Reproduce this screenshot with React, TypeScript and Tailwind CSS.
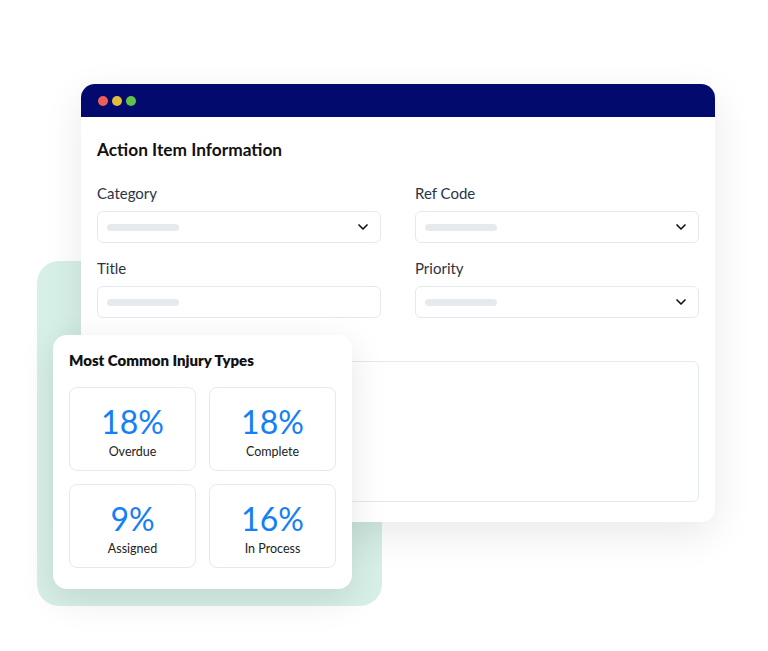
import { ChevronDown } from "lucide-react";

const stats = [
  { value: "18%", label: "Overdue" },
  { value: "18%", label: "Complete" },
  { value: "9%", label: "Assigned" },
  { value: "16%", label: "In Process" },
];

function Field({ label, select }: { label: string; select?: boolean }) {
  return (
    <div className="flex flex-col">
      <span className="text-[15px] leading-5 text-[#2b3445]">{label}</span>
      <div className="mt-2 flex h-8 items-center justify-between rounded-md border border-[#e4e9f0] bg-white pl-[9px] pr-[9px]">
        <div className="h-[7px] w-[72px] rounded-full bg-[#e6eaef]" />
        {select && <ChevronDown className="h-4 w-4 text-[#111]" strokeWidth={2.5} />}
      </div>
    </div>
  );
}

export default function App() {
  return (
    <div
      className="relative h-[651px] w-[768px] overflow-hidden bg-white"
      style={{ fontFamily: "Lato, 'Open Sans', sans-serif" }}
    >
      {/* mint backdrop */}
      <div className="absolute left-[37px] top-[261px] h-[345px] w-[345px] rounded-[22px] bg-[#d6efe7]" />

      {/* form window */}
      <div className="absolute left-[81px] top-[84px] flex h-[438px] w-[634px] flex-col overflow-hidden rounded-[14px] bg-white shadow-[0_12px_40px_rgba(0,0,0,0.09)]">
        <div className="flex h-[33px] items-center gap-1 bg-[#020a6e] pl-[17px] pr-4">
          <span className="h-[10px] w-[10px] rounded-full bg-[#ec5f57]" />
          <span className="h-[10px] w-[10px] rounded-full bg-[#e2bd3d]" />
          <span className="h-[10px] w-[10px] rounded-full bg-[#61c149]" />
        </div>
        <div className="flex flex-1 flex-col px-4 pb-5 pt-[21px]">
          <h2 className="text-[17.3px] font-bold leading-6 text-[#111]">Action Item Information</h2>
          <div className="mt-[21px] grid grid-cols-2 gap-x-[34px] gap-y-[15px]">
            <Field label="Category" select />
            <Field label="Ref Code" select />
            <Field label="Title" />
            <Field label="Priority" select />
          </div>
          <span className="mt-[15px] text-[15px] leading-5 text-[#2b3445]">Description</span>
          <div className="mt-2 flex-1 rounded-md border border-[#e4e9f0]" />
        </div>
      </div>

      {/* stats card */}
      <div className="absolute left-[53px] top-[335px] w-[299px] rounded-[14px] bg-white px-4 pb-[21px] pt-[15px] shadow-[0_10px_36px_rgba(0,0,0,0.10)]">
        <h3 className="text-[15px] font-extrabold leading-5 text-[#111]">Most Common Injury Types</h3>
        <div className="mt-[17px] grid grid-cols-2 gap-[13px]">
          {stats.map((s) => (
            <div
              key={s.label}
              className="flex h-[84px] flex-col items-center rounded-lg border border-[#e4e9f0] pt-[16px]"
            >
              <span className="text-[32px] leading-9 text-[#1480f5]">{s.value}</span>
              <span className="mt-[4px] text-[12.5px] leading-4 text-[#222]">{s.label}</span>
            </div>
          ))}
        </div>
      </div>
    </div>
  );
}
